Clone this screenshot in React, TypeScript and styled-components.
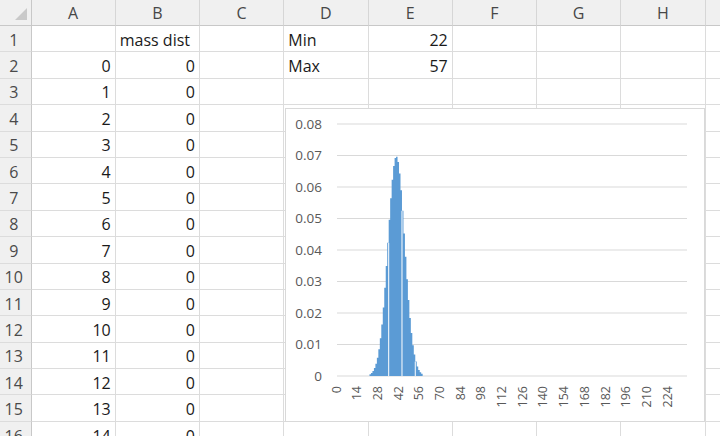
import React from 'react';
import styled, { createGlobalStyle } from 'styled-components';

const GlobalStyle = createGlobalStyle`
  html, body {
    margin: 0;
    padding: 0;
    background: #ffffff;
    overflow: hidden;
  }
  body {
    font-family: "Open Sans", "Liberation Sans", sans-serif;
  }
`;

const COLUMNS = ['A', 'B', 'C', 'D', 'E', 'F', 'G', 'H', 'I'];
const ROW_COUNT = 16;

type Align = 'left' | 'right';
interface CellData {
  text: string;
  align: Align;
}

// sheet contents, keyed by "B1" style refs
const cells: Record<string, CellData> = {
  B1: { text: 'mass dist', align: 'left' },
  D1: { text: 'Min', align: 'left' },
  E1: { text: '22', align: 'right' },
  D2: { text: 'Max', align: 'left' },
  E2: { text: '57', align: 'right' },
};
for (let r = 2; r <= ROW_COUNT; r++) {
  cells[`A${r}`] = { text: String(r - 2), align: 'right' };
  cells[`B${r}`] = { text: '0', align: 'right' };
}

const Sheet = styled.div`
  position: relative;
  display: grid;
  grid-template-columns: 31.5px repeat(9, 84.25px);
  grid-template-rows: 26px;
  grid-auto-rows: 26.4px;
  width: 800px;
`;

const Corner = styled.div`
  position: relative;
  background: #f0f0f0;
  border-right: 1px solid #c8c8c8;
  border-bottom: 1px solid #c8c8c8;
  box-sizing: border-box;

  &::after {
    content: '';
    position: absolute;
    right: 4px;
    bottom: 5px;
    width: 0;
    height: 0;
    border-left: 12px solid transparent;
    border-bottom: 12px solid #c9c9c9;
  }
`;

const ColHeader = styled.div`
  display: flex;
  align-items: center;
  justify-content: center;
  background: #f0f0f0;
  border-right: 1px solid #d6d6d6;
  border-bottom: 1px solid #c8c8c8;
  box-sizing: border-box;
  color: #474747;
  font-size: 16px;
  padding-top: 1px;
`;

const RowHeader = styled.div`
  display: flex;
  align-items: center;
  justify-content: center;
  background: #f0f0f0;
  border-right: 1px solid #c8c8c8;
  border-bottom: 1px solid #dcdcdc;
  box-sizing: border-box;
  color: #4a4a4a;
  font-size: 16px;
  padding-top: 2px;
  padding-right: 3px;
`;

const Cell = styled.div<{ $align: Align }>`
  display: flex;
  align-items: center;
  justify-content: ${p => (p.$align === 'right' ? 'flex-end' : 'flex-start')};
  border-right: 1px solid #dcdcdc;
  border-bottom: 1px solid #dcdcdc;
  box-sizing: border-box;
  padding: 2px 4px 0 4px;
  color: #1a1a1a;
  font-size: 16px;
  white-space: nowrap;
`;

const ChartBox = styled.div`
  position: absolute;
  left: 285px;
  top: 108px;
  width: 420px;
  height: 314px;
  background: #ffffff;
  border: 1px solid #d9d9d9;
  box-sizing: border-box;
`;

// chart geometry (relative to the chart box)
const PLOT_LEFT = 51;
const PLOT_RIGHT = 401;
const Y_TOP = 15;
const Y_ZERO = 267;
const Y_MAX = 0.08;
const CATEGORIES = 237;
const STEP = (PLOT_RIGHT - PLOT_LEFT) / CATEGORIES;
const LABEL_FONT = '"Open Sans", "Liberation Sans", sans-serif';

const mass = (i: number) => {
  if (i < 22 || i > 57) return 0;
  const d = i - 39.7;
  return 0.0697 * Math.exp(-(d * d) / (2 * 5.7 * 5.7));
};

const yOf = (v: number) => Y_ZERO - (v / Y_MAX) * (Y_ZERO - Y_TOP);

// one stepped outline for all the columns, so no seams between them
const barsPath = () => {
  let d = `M${PLOT_LEFT + 22 * STEP} ${Y_ZERO}`;
  for (let i = 22; i <= 57; i++) {
    const y = yOf(mass(i));
    d += ` V${y} H${PLOT_LEFT + (i + 1) * STEP}`;
  }
  return d + ` V${Y_ZERO} Z`;
};

const MassChart: React.FC = () => {
  const ticks = [0.08, 0.07, 0.06, 0.05, 0.04, 0.03, 0.02, 0.01, 0];
  const labels: number[] = [];
  for (let k = 0; k <= 224; k += 14) labels.push(k);
  const gaps = [34, 43, 52];

  return (
    <svg width="418" height="312" viewBox="0 0 418 312">
      {ticks.map(t => (
        <g key={t}>
          <line x1={PLOT_LEFT} x2={PLOT_RIGHT} y1={yOf(t)} y2={yOf(t)} stroke="#d9d9d9" strokeWidth={1} />
          <text x={36} y={yOf(t) + 4.5} textAnchor="end" fontFamily={LABEL_FONT} fontSize={13.5} fill="#595959">
            {t === 0 ? '0' : t.toFixed(2)}
          </text>
        </g>
      ))}
      <path d={barsPath()} fill="#5b9bd5" />
      {gaps.map(i => {
        const v = Math.min(mass(i), mass(i + 1));
        return <rect key={i} x={PLOT_LEFT + (i + 1) * STEP - 0.5} y={yOf(v)} width={1} height={Y_ZERO - yOf(v)} fill="#ffffff" />;
      })}
      {labels.map(k => (
        <text
          key={k}
          transform={`translate(${PLOT_LEFT + (k + 0.5) * STEP - 1.5}, 277) rotate(-90)`}
          textAnchor="end"
          dominantBaseline="central"
          fontFamily={LABEL_FONT}
          fontSize={12.5}
          fill="#595959"
        >
          {k}
        </text>
      ))}
    </svg>
  );
};

const App: React.FC = () => {
  const rows: number[] = [];
  for (let r = 1; r <= ROW_COUNT; r++) rows.push(r);

  return (
    <>
      <GlobalStyle />
      <Sheet>
        <Corner />
        {COLUMNS.map(c => (
          <ColHeader key={c}>{c === 'I' ? '' : c}</ColHeader>
        ))}
        {rows.map(r => (
          <React.Fragment key={r}>
            <RowHeader>{r}</RowHeader>
            {COLUMNS.map(c => {
              const cell = cells[`${c}${r}`];
              return (
                <Cell key={c} $align={cell ? cell.align : 'left'}>
                  {cell ? cell.text : ''}
                </Cell>
              );
            })}
          </React.Fragment>
        ))}
        <ChartBox>
          <MassChart />
        </ChartBox>
      </Sheet>
    </>
  );
};

export default App;
